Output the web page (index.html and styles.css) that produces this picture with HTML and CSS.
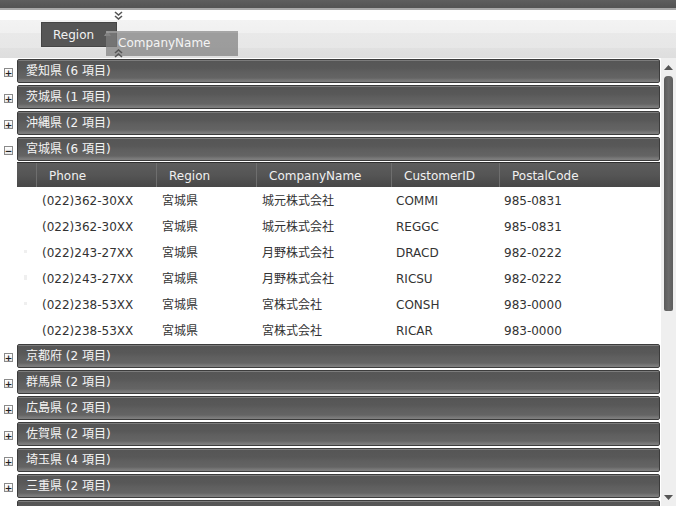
FILE: index.html
```html
<!DOCTYPE html>
<html lang="ja">
<head>
<meta charset="utf-8">
<link rel="stylesheet" href="styles.css">
</head>
<body>
<div class="topbar"></div>
<div class="grouppanel">
  <div class="chip">
    <span>Region</span>
    <svg class="sortarrow" width="7" height="5" viewBox="0 0 7 5"><path d="M0 5 L3.5 0 L7 5 Z" fill="#8a8a8a"/></svg>
  </div>
  <div class="dragchip">CompanyName</div>
  <svg class="chev chev-down" width="9" height="9" viewBox="0 0 9 9"><path d="M1 1 L4.5 4 L8 1 M1 5 L4.5 8 L8 5" fill="none" stroke="#555" stroke-width="1.6"/></svg>
  <svg class="chev chev-up" width="9" height="9" viewBox="0 0 9 9"><path d="M1 4 L4.5 1 L8 4 M1 8 L4.5 5 L8 8" fill="none" stroke="#555" stroke-width="1.6"/></svg>
</div>
<div class="gridwrap">
  <div class="grid">
    <div class="group"><span class="exp">+</span><div class="gbar">愛知県 (6 項目)</div></div>
    <div class="group"><span class="exp">+</span><div class="gbar">茨城県 (1 項目)</div></div>
    <div class="group"><span class="exp">+</span><div class="gbar">沖縄県 (2 項目)</div></div>
    <div class="group"><span class="exp">−</span><div class="gbar">宮城県 (6 項目)</div></div>
    <div class="colhead">
      <div class="hc ind"></div>
      <div class="hc">Phone</div>
      <div class="hc">Region</div>
      <div class="hc">CompanyName</div>
      <div class="hc">CustomerID</div>
      <div class="hc last">PostalCode</div>
    </div>
    <div class="row"><div class="c ind"></div><div class="c">(022)362-30XX</div><div class="c">宮城県</div><div class="c">城元株式会社</div><div class="c">COMMI</div><div class="c">985-0831</div></div>
    <div class="row"><div class="c ind"></div><div class="c">(022)362-30XX</div><div class="c">宮城県</div><div class="c">城元株式会社</div><div class="c">REGGC</div><div class="c">985-0831</div></div>
    <div class="row"><div class="c ind"><i class="dot"></i></div><div class="c">(022)243-27XX</div><div class="c">宮城県</div><div class="c">月野株式会社</div><div class="c">DRACD</div><div class="c">982-0222</div></div>
    <div class="row"><div class="c ind"><i class="dot tall"></i></div><div class="c">(022)243-27XX</div><div class="c">宮城県</div><div class="c">月野株式会社</div><div class="c">RICSU</div><div class="c">982-0222</div></div>
    <div class="row"><div class="c ind"><i class="dot"></i></div><div class="c">(022)238-53XX</div><div class="c">宮城県</div><div class="c">宮株式会社</div><div class="c">CONSH</div><div class="c">983-0000</div></div>
    <div class="row"><div class="c ind"></div><div class="c">(022)238-53XX</div><div class="c">宮城県</div><div class="c">宮株式会社</div><div class="c">RICAR</div><div class="c">983-0000</div></div>
    <div class="group"><span class="exp">+</span><div class="gbar">京都府 (2 項目)</div></div>
    <div class="group"><span class="exp">+</span><div class="gbar">群馬県 (2 項目)</div></div>
    <div class="group"><span class="exp">+</span><div class="gbar">広島県 (2 項目)</div></div>
    <div class="group"><span class="exp">+</span><div class="gbar">佐賀県 (2 項目)</div></div>
    <div class="group"><span class="exp">+</span><div class="gbar">埼玉県 (4 項目)</div></div>
    <div class="group"><span class="exp">+</span><div class="gbar">三重県 (2 項目)</div></div>
    <div class="group"><span class="exp"></span><div class="gbar"></div></div>
  </div>
  <div class="scrollbar">
    <svg class="sarrow" width="9" height="5" viewBox="0 0 9 5"><path d="M0 5 L4.5 0 L9 5 Z" fill="#555"/></svg>
    <div class="thumb"></div>
    <div class="track"></div>
    <svg class="sarrow" width="9" height="5" viewBox="0 0 9 5"><path d="M0 0 L4.5 5 L9 0 Z" fill="#555"/></svg>
  </div>
</div>
</body>
</html>
```

FILE: styles.css
```css
html, body {
  margin: 0;
  padding: 0;
  width: 676px;
  height: 506px;
  overflow: hidden;
  background: #ffffff;
  font-family: "DejaVu Sans", "Noto Sans CJK JP", sans-serif;
  font-size: 12px;
}

.topbar {
  height: 8px;
  background: linear-gradient(#5e5e5e, #535353);
  border-bottom: 2px solid #a8a8a8;
}

.grouppanel {
  position: relative;
  height: 48px;
  background: linear-gradient(#ffffff 0px, #ffffff 10px, #f3f3f3 10px, #f0f0f0 23px, #e9e9e9 23px, #e7e7e7 38px, #e1e1e1 38px, #dedede 48px);
  padding: 12px 0 0 41px;
  box-sizing: border-box;
}

.chip {
  width: 76px;
  height: 25px;
  box-sizing: border-box;
  background: #565656;
  border: 1px solid #454545;
  color: #f2f2f2;
  display: flex;
  align-items: center;
  padding-left: 11px;
  position: relative;
  z-index: 1;
}

.chip span {
  flex: 1;
  margin-top: 1px;
}

.sortarrow {
  margin-right: 5px;
  margin-top: -2px;
}

.dragchip {
  position: absolute;
  left: 106px;
  top: 21px;
  width: 132px;
  height: 25px;
  box-sizing: border-box;
  background: rgba(128, 128, 128, 0.72);
  border-top: 2px solid rgba(170, 170, 170, 0.6);
  color: #f4f4f4;
  padding-left: 12px;
  line-height: 20px;
  z-index: 2;
}

.chev {
  position: absolute;
  left: 114px;
  z-index: 3;
}

.chev-down { top: 1px; }
.chev-up { top: 39px; }

.gridwrap {
  display: flex;
  height: 448px;
}

.grid {
  width: 661px;
  overflow: hidden;
}

.group {
  display: flex;
  align-items: flex-start;
  height: 26px;
}

.exp {
  width: 9px;
  height: 9px;
  box-sizing: border-box;
  margin: 10px 4px 0 4px;
  border: 1px solid #8a8a8a;
  background: linear-gradient(#ffffff, #e6e6e6);
  color: #222;
  font-size: 9px;
  line-height: 6px;
  font-weight: bold;
  display: flex;
  align-items: center;
  justify-content: center;
}

.gbar {
  flex: 1;
  height: 24px;
  box-sizing: border-box;
  margin-right: 1px;
  margin-top: 1px;
  border: 1px solid #3c3c3c;
  border-radius: 2px;
  background: linear-gradient(#7c7c7c 0px, #7c7c7c 1px, #565656 1px, #585858 8px, #5f5f5f 12px, #646464 18px, #767676 20px, #808080 22px);
  color: #f4f4f4;
  padding: 1px 0 0 8px;
  line-height: 21px;
}

.colhead {
  display: grid;
  grid-template-columns: 20px 120px 100px 135px 108px 1fr;
  margin-left: 17px;
  margin-right: 1px;
  height: 25px;
  border-top: 1px solid #2e2e2e;
  box-sizing: border-box;
  background: linear-gradient(#5d5d5d, #555555 12px, #474747 24px);
  color: #f0f0f0;
}

.hc {
  padding: 2px 0 0 12px;
  line-height: 22px;
  border-right: 1px solid #6e6e6e;
  box-sizing: border-box;
}

.hc.ind { padding: 0; }
.hc.last { border-right: 0; }

.row {
  display: grid;
  grid-template-columns: 20px 120px 100px 135px 108px 1fr;
  margin-left: 17px;
  height: 26px;
  color: #333333;
}

.c {
  padding: 2px 0 0 5px;
  line-height: 24px;
  white-space: nowrap;
}

.c:nth-child(5), .c:nth-child(6) { padding-left: 4px; }

.c.ind {
  padding: 0;
  position: relative;
}

.dot {
  position: absolute;
  left: 7px;
  top: 11px;
  width: 3px;
  height: 3px;
  background: #efefef;
}

.dot.tall { height: 5px; top: 10px; }

.scrollbar {
  width: 15px;
  background: #efefef;
  display: flex;
  flex-direction: column;
  align-items: center;
}

.sarrow {
  margin: 7px 0 6px 0;
  flex: none;
}

.thumb {
  width: 9px;
  height: 235px;
  border-radius: 4px 4px 2px 2px;
  background: linear-gradient(90deg, #5a5a5a, #6a6a6a 50%, #5e5e5e);
  flex: none;
}

.track { flex: 1; }
```
